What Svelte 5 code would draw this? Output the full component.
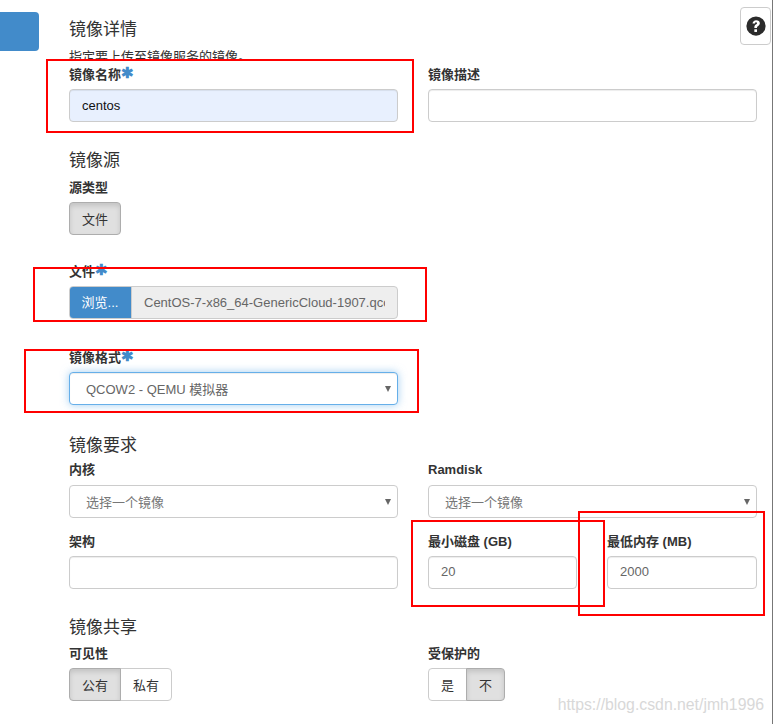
<script>
  const marks = [
    { x: 46, y: 59, w: 368, h: 74 },
    { x: 33, y: 267, w: 394, h: 55 },
    { x: 24, y: 349, w: 395, h: 64 },
    { x: 411, y: 520, w: 194, h: 87 },
    { x: 578, y: 511, w: 187, h: 105 }
  ];
</script>

<div class="page">
  <div class="rail"></div>

  <form class="form">
    <section class="details">
      <h4>镜像详情</h4>
      <p class="help">指定要上传至镜像服务的镜像。</p>
      <div class="row">
        <div class="field">
          <label for="name">镜像名称<span class="req">✱</span></label>
          <input id="name" class="autofilled" value="centos" />
        </div>
        <div class="field">
          <label for="desc">镜像描述</label>
          <input id="desc" />
        </div>
      </div>
    </section>

    <section class="source">
      <h4>镜像源</h4>
      <div class="row">
        <div class="field">
          <span class="label">源类型</span>
          <div class="group"><button type="button" class="btn on">文件</button></div>
        </div>
      </div>
      <div class="row file">
        <div class="field">
          <span class="label">文件<span class="req">✱</span></span>
          <div class="picker">
            <span class="browse">浏览...</span>
            <span class="filename">CentOS-7-x86_64-GenericCloud-1907.qcow2</span>
          </div>
        </div>
      </div>
      <div class="row format">
        <div class="field">
          <label for="format">镜像格式<span class="req">✱</span></label>
          <div id="format" class="select focused"><span>QCOW2 - QEMU 模拟器</span></div>
        </div>
      </div>
    </section>

    <section class="reqs">
      <h4>镜像要求</h4>
      <div class="row first">
        <div class="field">
          <span class="label">内核</span>
          <div class="select"><span>选择一个镜像</span></div>
        </div>
        <div class="field">
          <span class="label">Ramdisk</span>
          <div class="select"><span>选择一个镜像</span></div>
        </div>
      </div>
      <div class="row second">
        <div class="field">
          <label for="arch">架构</label>
          <input id="arch" />
        </div>
        <div class="row inner">
          <div class="field">
            <label for="disk">最小磁盘 (GB)</label>
            <input id="disk" class="num" value="20" />
          </div>
          <div class="field">
            <label for="ram">最低内存 (MB)</label>
            <input id="ram" class="num" value="2000" />
          </div>
        </div>
      </div>
    </section>

    <section class="sharing">
      <h4>镜像共享</h4>
      <div class="row">
        <div class="field">
          <span class="label">可见性</span>
          <div class="group">
            <button type="button" class="btn on">公有</button>
            <button type="button" class="btn">私有</button>
          </div>
        </div>
        <div class="field">
          <span class="label">受保护的</span>
          <div class="group">
            <button type="button" class="btn narrow">是</button>
            <button type="button" class="btn narrow on">不</button>
          </div>
        </div>
      </div>
    </section>
  </form>

  <button type="button" class="help-btn" aria-label="帮助">
    <svg viewBox="0 0 24 24" width="22" height="22">
      <circle cx="12" cy="12" r="10.5" fill="#2b2b2b" />
      <path d="M8.2 9.4c.2-2.4 1.8-3.8 4-3.8 2.4 0 4 1.4 4 3.4 0 1.4-.8 2.2-1.9 3-.9.6-1.2 1-1.2 1.8v.3h-2.9v-.7c0-1.4.5-2.2 1.6-3 .9-.6 1.3-1 1.3-1.5 0-.6-.4-1-1-1-.8 0-1.1.5-1.2 1.5z" fill="#fff" />
      <rect x="10.2" y="15.6" width="2.9" height="2.9" fill="#fff" />
    </svg>
  </button>

  {#each marks as m}
    <div class="mark" style="left:{m.x}px;top:{m.y}px;width:{m.w}px;height:{m.h}px"></div>
  {/each}

  <div class="watermark">https://blog.csdn.net/jmh1996</div>
</div>

<style>
  :global(body) {
    margin: 0;
    background: #fff;
  }

  .page {
    position: relative;
    display: flex;
    width: 773px;
    height: 724px;
    overflow: hidden;
    box-sizing: border-box;
    border-right: 1px solid #777;
    font-family: "Liberation Sans", "Noto Sans CJK SC", sans-serif;
    font-size: 13px;
    color: #333;
  }

  .rail {
    flex: none;
    width: 39px;
    height: 39px;
    margin-top: 12px;
    background: #428bca;
    border-radius: 0 4px 4px 0;
  }

  .form {
    width: 688px;
    margin-left: 30px;
  }

  section {
    display: flex;
    flex-direction: column;
  }

  h4 {
    margin: 0;
    font-size: 17px;
    font-weight: 400;
    line-height: 20px;
  }

  .details { padding-top: 20px; }
  .source { margin-top: 29px; }
  .reqs { margin-top: 31px; }
  .sharing { margin-top: 29px; }

  .help {
    height: 11px;
    margin: 10px 0 0;
    line-height: 14px;
    overflow: hidden;
    white-space: nowrap;
  }

  .details .row { margin-top: 6px; }

  .row {
    display: grid;
    grid-template-columns: 1fr 1fr;
    gap: 30px;
  }

  .row.inner { grid-template-columns: 149px 150px; }

  .field {
    display: flex;
    flex-direction: column;
    min-width: 0;
  }

  label, .label {
    display: block;
    height: 15px;
    margin-bottom: 7px;
    font-weight: 700;
    line-height: 15px;
    white-space: nowrap;
  }

  .first .label { margin-bottom: 8px; }

  .req {
    display: inline-block;
    margin-left: 0;
    color: #428bca;
    font-size: 15px;
    line-height: 0;
    vertical-align: 1px;
  }

  input, .select, .picker {
    box-sizing: border-box;
    width: 100%;
    height: 33px;
    border: 1px solid #ccc;
    border-radius: 4px;
    background: #fff;
    font: inherit;
    color: #555;
  }

  input {
    padding: 0 12px;
    outline: none;
    box-shadow: inset 0 1px 1px rgba(0, 0, 0, 0.075);
  }

  .autofilled {
    background: #e8f0fe;
    color: #111;
  }

  .num {
    padding: 0 12px 2px;
    color: #666;
  }

  .select {
    position: relative;
    display: flex;
    align-items: center;
    padding: 0 16px;
    color: #777;
  }

  .select::after {
    content: "";
    position: absolute;
    right: 6px;
    top: 13px;
    border: 3px solid transparent;
    border-top: 6px solid #666;
    border-bottom: 0;
  }

  .focused {
    border-color: #66afe9;
    box-shadow: inset 0 1px 1px rgba(0, 0, 0, 0.075), 0 0 8px rgba(102, 175, 233, 0.6);
    color: #666;
  }

  .source > h4 { margin-bottom: 9px; }
  .file { margin-top: 29px; }
  .format { margin-top: 31px; }

  .group { display: flex; }

  .btn {
    box-sizing: border-box;
    width: 52px;
    height: 33px;
    padding: 0;
    border: 1px solid #ccc;
    background: #fff;
    font: inherit;
    color: #333;
  }

  .btn + .btn { margin-left: -1px; }
  .btn:first-child { border-radius: 4px 0 0 4px; }
  .btn:last-child { border-radius: 0 4px 4px 0; }
  .btn:only-child { border-radius: 4px; }
  .narrow { width: 39px; }

  .btn.on {
    position: relative;
    background: #e0e0e0;
    border-color: #adadad;
    box-shadow: inset 0 3px 5px rgba(0, 0, 0, 0.125);
  }

  .picker {
    display: flex;
    overflow: hidden;
    background: #eee;
  }

  .browse {
    flex: none;
    width: 62px;
    margin: -1px 0 -1px -1px;
    border-right: 1px solid #ccc;
    background: #428bca;
    color: #fff;
    line-height: 33px;
    text-align: center;
  }

  .filename {
    min-width: 0;
    margin: 0 12px;
    color: #666;
    line-height: 31px;
    overflow: hidden;
    white-space: nowrap;
  }

  .reqs > h4 { margin-bottom: 6px; }
  .second { margin-top: 16px; }
  .sharing > h4 { margin-bottom: 8px; }

  .help-btn {
    position: absolute;
    left: 740px;
    top: 7px;
    display: flex;
    align-items: center;
    justify-content: center;
    box-sizing: border-box;
    width: 31px;
    height: 38px;
    padding: 0;
    border: 1px solid #ccc;
    border-radius: 4px;
    background: #fff;
  }

  .mark {
    position: absolute;
    box-sizing: border-box;
    border: 2px solid #f00;
    pointer-events: none;
  }

  .watermark {
    position: absolute;
    right: 8px;
    bottom: 10px;
    color: #d8d8d8;
    font-size: 15.8px;
    line-height: 18px;
    white-space: nowrap;
  }
</style>
